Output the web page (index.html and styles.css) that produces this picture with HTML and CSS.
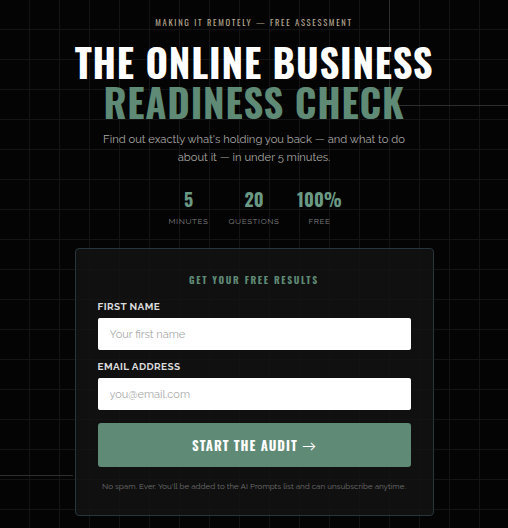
FILE: index.html
```html
<!DOCTYPE html>
<html lang="en">
<head>
<meta charset="utf-8">
<title>The Online Business Readiness Check</title>
<link rel="stylesheet" href="styles.css">
</head>
<body>
<div class="deco deco-v"></div>
<div class="deco deco-h"></div>
<div class="deco deco-h2"></div>
<main class="page">
  <p class="eyebrow">MAKING IT REMOTELY — FREE ASSESSMENT</p>
  <h1 class="title">
    <span class="title-line">THE ONLINE BUSINESS</span>
    <span class="title-line accent">READINESS CHECK</span>
  </h1>
  <p class="lead">Find out exactly what's holding you back — and what to do about it — in under 5 minutes.</p>
  <div class="stats">
    <div class="stat"><span class="stat-num">5</span><span class="stat-label">MINUTES</span></div>
    <div class="stat"><span class="stat-num">20</span><span class="stat-label">QUESTIONS</span></div>
    <div class="stat"><span class="stat-num">100%</span><span class="stat-label">FREE</span></div>
  </div>
  <form class="card">
    <h2 class="card-title">GET YOUR FREE RESULTS</h2>
    <label class="field">
      <span class="field-label">FIRST NAME</span>
      <input class="input" type="text" placeholder="Your first name">
    </label>
    <label class="field">
      <span class="field-label">EMAIL ADDRESS</span>
      <input class="input" type="email" placeholder="you@email.com">
    </label>
    <button class="btn" type="button">START THE AUDIT <span class="arrow">→</span></button>
    <p class="fine">No spam. Ever. You'll be added to the AI Prompts list and can unsubscribe anytime.</p>
  </form>
</main>
</body>
</html>
```

FILE: styles.css
```css
html, body {
  margin: 0;
  padding: 0;
}
body {
  background-color: #040404;
  background-image:
    linear-gradient(to right, transparent 29px, #141416 29px, #141416 30px),
    linear-gradient(to bottom, transparent 29px, #141416 29px, #141416 30px);
  background-size: 30px 30px;
  min-height: 528px;
  font-family: "Raleway", "Lato", "Open Sans", sans-serif;
  color: #fff;
  position: relative;
  overflow: hidden;
}
.deco {
  position: absolute;
  background: #2c2f2e;
}
.deco-v { left: 389px; top: 0; width: 1px; height: 105px; }
.deco-h { left: 395px; top: 105px; width: 113px; height: 1px; }
.deco-h2 { left: 0; top: 475px; width: 73px; height: 1px; }

.page {
  position: relative;
  display: flex;
  flex-direction: column;
  align-items: center;
  padding-top: 16px;
}
.eyebrow {
  margin: 0;
  font-family: "Oswald", "Liberation Sans Narrow", "DejaVu Sans Condensed", sans-serif;
  font-size: 8.5px;
  letter-spacing: 1.7px;
  color: #b3a48e;
  line-height: 12px;
}
.title {
  margin: 14px 0 0;
  display: flex;
  flex-direction: column;
  align-items: center;
  font-family: "Oswald", "Liberation Sans Narrow", "DejaVu Sans Condensed", sans-serif;
  font-weight: 700;
  font-size: 38.5px;
  line-height: 40px;
  letter-spacing: 0.8px;
}
.title-line { color: #ffffff; }
.title-line.accent { color: #5f8a75; }
.lead {
  margin: 8px 0 0;
  width: 320px;
  text-align: center;
  font-size: 11.2px;
  line-height: 18px;
  color: #a9a9a3;
}
.stats {
  display: flex;
  gap: 16px;
  margin-top: 22px;
}
.stat {
  display: flex;
  flex-direction: column;
  align-items: center;
  min-width: 48px;
}
.stat-num {
  font-family: "Oswald", "Liberation Sans Narrow", "DejaVu Sans Condensed", sans-serif;
  font-weight: 700;
  font-size: 18px;
  line-height: 22px;
  color: #6b9a84;
}
.stat-label {
  margin-top: 6px;
  font-size: 8px;
  letter-spacing: 0.6px;
  color: #7e7e7e;
}
.card {
  margin-top: 22px;
  width: 313px;
  padding: 24px 22px 24px;
  background: rgba(20, 20, 20, 0.82);
  border: 1px solid #27363c;
  border-radius: 4px;
  display: flex;
  flex-direction: column;
}
.card-title {
  margin: 0 0 13px;
  text-align: center;
  font-family: "Oswald", "Liberation Sans Narrow", "DejaVu Sans Condensed", sans-serif;
  font-weight: 700;
  font-size: 9.5px;
  letter-spacing: 1.7px;
  color: #5f8a75;
  line-height: 14px;
}
.field {
  display: flex;
  flex-direction: column;
  margin-bottom: 10px;
}
.field-label {
  font-size: 10px;
  font-weight: 700;
  letter-spacing: 0.4px;
  color: #dcdcdc;
  line-height: 14px;
  margin-bottom: 4px;
}
.input {
  height: 32px;
  box-sizing: border-box;
  border: none;
  border-radius: 2px;
  background: #ffffff;
  padding: 0 12px;
  font-family: inherit;
  font-size: 11px;
  color: #333;
}
.input::placeholder { color: #a9a9a9; }
.btn {
  margin-top: 3px;
  height: 44px;
  border: none;
  border-radius: 3px;
  background: #5f8a75;
  color: #ffffff;
  font-family: "Oswald", "Liberation Sans Narrow", "DejaVu Sans Condensed", sans-serif;
  font-weight: 700;
  font-size: 13px;
  letter-spacing: 1px;
}
.arrow {
  font-family: "Raleway", "Lato", sans-serif;
  font-weight: 400;
  font-size: 14px;
  letter-spacing: 0;
}
.fine {
  margin: 14px 0 0;
  text-align: center;
  white-space: nowrap;
  font-size: 8px;
  line-height: 10px;
  color: #707070;
}
```
